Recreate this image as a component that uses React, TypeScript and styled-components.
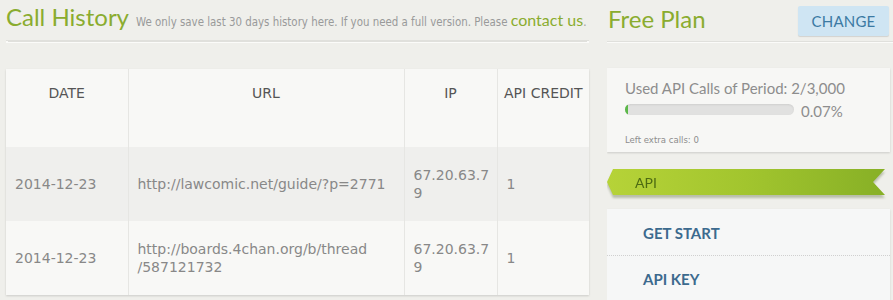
import styled, { createGlobalStyle } from "styled-components";

const GlobalStyle = createGlobalStyle`
  body {
    margin: 0;
    background: #efefeb;
    font-family: "DejaVu Sans", sans-serif;
  }
`;

interface CallRow {
  date: string;
  url: string[];
  ip: string;
  credit: number;
}

const rows: CallRow[] = [
  { date: "2014-12-23", url: ["http://lawcomic.net/guide/?p=2771"], ip: "67.20.63.79", credit: 1 },
  { date: "2014-12-23", url: ["http://boards.4chan.org/b/thread", "/587121732"], ip: "67.20.63.79", credit: 1 },
];

const App = () => {
  return (
    <Page>
      <GlobalStyle />
      <Main>
        <Header>
          <Title>Call History</Title>
          <Note>
            We only save last 30 days history here. If you need a full version. Please{" "}
            <Contact href="#">contact us</Contact>.
          </Note>
        </Header>
        <Table>
          <colgroup>
            <col style={{ width: 122 }} />
            <col style={{ width: 276 }} />
            <col style={{ width: 93 }} />
            <col style={{ width: 92 }} />
          </colgroup>
          <thead>
            <tr>
              <Th>DATE</Th>
              <Th>URL</Th>
              <Th>IP</Th>
              <Th>API CREDIT</Th>
            </tr>
          </thead>
          <tbody>
            {rows.map((row, i) => (
              <Tr key={i} $odd={i % 2 === 0}>
                <Td>{row.date}</Td>
                <Td>
                  {row.url.map((part, j) => (
                    <span key={j}>
                      {j > 0 && <wbr />}
                      {part}
                    </span>
                  ))}
                </Td>
                <IpCell>{row.ip}</IpCell>
                <Td>{row.credit}</Td>
              </Tr>
            ))}
          </tbody>
        </Table>
      </Main>

      <Side>
        <PlanHeader>
          <PlanTitle>Free Plan</PlanTitle>
          <ChangeButton>CHANGE</ChangeButton>
        </PlanHeader>
        <UsageCard>
          <UsageLabel>Used API Calls of Period: 2/3,000</UsageLabel>
          <ProgressRow>
            <Track>
              <Fill style={{ width: `${Math.max(0.07, 2)}%` }} />
            </Track>
            <Percent>0.07%</Percent>
          </ProgressRow>
          <Extra>Left extra calls: 0</Extra>
        </UsageCard>
        <RibbonWrap>
          <Ribbon>API</Ribbon>
        </RibbonWrap>
        <Menu>
          <MenuItem>GET START</MenuItem>
          <MenuItem>API KEY</MenuItem>
        </Menu>
      </Side>
    </Page>
  );
};

export default App;

const Page = styled.div`
  display: flex;
  gap: 18px;
  padding-left: 6px;
  height: 300px;
  overflow: hidden;
`;

const Main = styled.div`
  width: 583px;
  display: flex;
  flex-direction: column;
`;

const Header = styled.div`
  display: flex;
  align-items: baseline;
  gap: 7px;
  height: 41px;
  flex-shrink: 0;
  padding-top: 2px;
  box-sizing: border-box;
  border-bottom: 1px solid #e0e0dc;
  box-shadow: 0 3px 0 -2px #e0e0dc, 0 2px 0 #fbfbf9;
  margin-bottom: 28px;
`;

const Title = styled.h1`
  margin: 0;
  font-family: Lato, sans-serif;
  font-weight: 400;
  font-size: 24px;
  color: #8aac2f;
  white-space: nowrap;
`;

const Note = styled.span`
  font-family: "DejaVu Sans Condensed", "Liberation Sans", sans-serif;
  font-size: 11.4px;
  color: #999a9a;
  white-space: nowrap;
`;

const Contact = styled.a`
  font-family: Lato, sans-serif;
  font-size: 16px;
  color: #8aac2f;
  text-decoration: none;
`;

const Table = styled.table`
  width: 583px;
  table-layout: fixed;
  border-collapse: collapse;
  box-shadow: 0 1px 2px rgba(0, 0, 0, 0.15);
  font-size: 14px;
  line-height: 18px;
`;

const Th = styled.th`
  height: 78px;
  box-sizing: border-box;
  padding: 15px 4px 0;
  vertical-align: top;
  background: #f8f8f6;
  color: #555;
  font-weight: 400;
  text-align: center;
  white-space: nowrap;
  border-left: 1px solid #e6e6e3;
  &:first-child {
    border-left: none;
  }
`;

const Tr = styled.tr<{ $odd: boolean }>`
  height: 74px;
  background: ${(p) => (p.$odd ? "#efefed" : "#f8f8f6")};
`;

const Td = styled.td`
  padding: 0 9px;
  color: #888;
  vertical-align: middle;
  border-left: 1px solid #e6e6e3;
  &:first-child {
    border-left: none;
  }
`;

const IpCell = styled(Td)`
  padding-right: 6px;
  overflow-wrap: anywhere;
  word-break: break-all;
`;

const Side = styled.div`
  flex: 1;
  display: flex;
  flex-direction: column;
  overflow: hidden;
`;

const PlanHeader = styled.div`
  display: flex;
  justify-content: space-between;
  align-items: flex-start;
  height: 42px;
  flex-shrink: 0;
  box-sizing: border-box;
  padding: 6px 4px 0 1px;
  border-bottom: 1px solid #e0e0dc;
  box-shadow: 0 1px 0 #fbfbf9;
  margin-bottom: 26px;
`;

const PlanTitle = styled.h2`
  margin: 0;
  margin-top: -2px;
  font-family: Lato, sans-serif;
  font-weight: 400;
  font-size: 24px;
  color: #8aac2f;
`;

const ChangeButton = styled.button`
  width: 91px;
  height: 30px;
  border: none;
  border-radius: 2px;
  background: #cfe5f3;
  box-shadow: 0 1px 1px rgba(0, 0, 0, 0.12);
  color: #3c7aa3;
  font-family: Lato, sans-serif;
  font-size: 15px;
  letter-spacing: 0.2px;
  cursor: pointer;
`;

const UsageCard = styled.div`
  width: 283px;
  height: 84px;
  flex-shrink: 0;
  box-sizing: border-box;
  padding: 11px 18px 0;
  background: #f7f7f5;
  box-shadow: 0 1px 2px rgba(0, 0, 0, 0.15);
  margin-bottom: 17px;
`;

const UsageLabel = styled.div`
  font-family: Lato, sans-serif;
  font-size: 15px;
  color: #8d8d8d;
  line-height: 18px;
`;

const ProgressRow = styled.div`
  display: flex;
  align-items: center;
  gap: 7px;
  margin-top: 1px;
`;

const Track = styled.div`
  width: 169px;
  height: 11px;
  border-radius: 6px;
  background: #e1e1e0;
  box-shadow: inset 0 1px 2px rgba(0, 0, 0, 0.08);
  overflow: hidden;
`;

const Fill = styled.div`
  height: 100%;
  background: #5bb848;
`;

const Percent = styled.span`
  font-family: Lato, sans-serif;
  font-size: 15px;
  color: #8d8d8d;
  margin-top: 4px;
`;

const Extra = styled.div`
  margin-top: 14px;
  font-family: "DejaVu Sans Condensed", "Liberation Sans", sans-serif;
  font-size: 9.5px;
  color: #8d8d8d;
`;

const RibbonWrap = styled.div`
  width: 278px;
  flex-shrink: 0;
  filter: drop-shadow(0 3px 1px rgba(60, 80, 20, 0.3));
  margin-bottom: 14px;
`;

const Ribbon = styled.div`
  height: 26px;
  box-sizing: border-box;
  padding-left: 28px;
  display: flex;
  align-items: center;
  background: linear-gradient(90deg, #b6d338 0%, #a2c52e 50%, #87b026 100%);
  clip-path: polygon(6px 0, 100% 0, calc(100% - 12px) 50%, 100% 100%, 6px 100%, 0 50%);
  font-family: Lato, sans-serif;
  font-size: 14px;
  color: #4d6b12;
`;

const Menu = styled.div`
  width: 283px;
  flex-shrink: 0;
  padding-top: 1px;
  background: #f6f7f7;
  box-shadow: 0 1px 2px rgba(0, 0, 0, 0.12);
`;

const MenuItem = styled.div`
  height: 46px;
  box-sizing: border-box;
  padding-left: 36px;
  display: flex;
  align-items: center;
  font-family: Lato, sans-serif;
  font-weight: 700;
  font-size: 15px;
  color: #3c6a8e;
  border-bottom: 1px dotted #d0d0d0;
  &:last-child {
    border-bottom: none;
  }
`;
